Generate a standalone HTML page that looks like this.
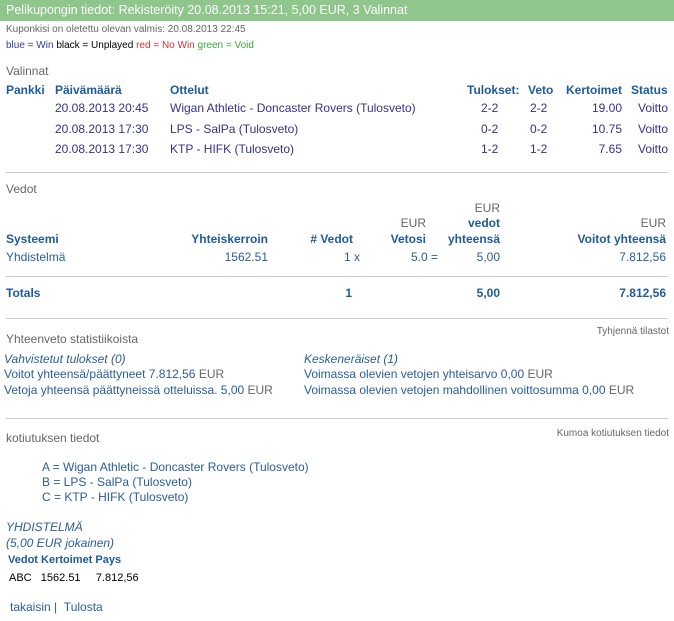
<!DOCTYPE html>
<html><head><meta charset="utf-8"><style>
body{margin:0;width:674px;height:621px;background:#fff;font-family:"Liberation Sans",Arial,sans-serif;font-size:12px;position:relative;overflow:hidden}
div.t{position:absolute;line-height:14px;white-space:nowrap}
.hd{position:absolute;left:0;top:0;width:674px;height:21px;background:#8fc68c;color:#fff;font-size:12.5px;line-height:21px;text-indent:6px}
.g{color:#666}.b{color:#1e5a9c;font-weight:bold}.d{color:#33338a}.lb{color:#2a5d9a}
.r{text-align:right}
.hr{position:absolute;left:6px;width:662px;height:1px;background:#ccc}
.s{font-size:10px}
.i{font-style:italic}
</style></head><body>
<div class="hd">Pelikupongin tiedot: Rekisteröity 20.08.2013 15:21, 5,00 EUR, 3 Valinnat</div>
<div class="t g s" style="left:6px;top:23px">Kuponkisi on oletettu olevan valmis: 20.08.2013 22:45</div>
<div class="t s" style="left:6px;top:39px"><span style="color:#3a3a9a">blue = Win</span> <span style="color:#000">black = Unplayed</span> <span style="color:#c33">red = No Win</span> <span style="color:#3a3">green = Void</span></div>
<div class="t g" style="left:6px;top:64px">Valinnat</div>
<div class="t b" style="left:6px;top:83px">Pankki</div>
<div class="t b" style="left:55px;top:83px">Päivämäärä</div>
<div class="t b" style="left:170px;top:83px">Ottelut</div>
<div class="t b" style="left:467px;top:83px">Tulokset:</div>
<div class="t b" style="left:528px;top:83px">Veto</div>
<div class="t b" style="left:566px;top:83px">Kertoimet</div>
<div class="t b" style="left:631px;top:83px">Status</div>

<div class="t d" style="left:55px;top:101px">20.08.2013 20:45</div>
<div class="t d" style="left:170px;top:101px">Wigan Athletic - Doncaster Rovers (Tulosveto)</div>
<div class="t d" style="left:481px;top:101px">2-2</div><div class="t d" style="left:530px;top:101px">2-2</div>
<div class="t d r" style="right:52px;top:101px">19.00</div><div class="t d" style="left:638px;top:101px">Voitto</div>

<div class="t d" style="left:55px;top:122px">20.08.2013 17:30</div>
<div class="t d" style="left:170px;top:122px">LPS - SalPa (Tulosveto)</div>
<div class="t d" style="left:481px;top:122px">0-2</div><div class="t d" style="left:530px;top:122px">0-2</div>
<div class="t d r" style="right:52px;top:122px">10.75</div><div class="t d" style="left:638px;top:122px">Voitto</div>

<div class="t d" style="left:55px;top:142px">20.08.2013 17:30</div>
<div class="t d" style="left:170px;top:142px">KTP - HIFK (Tulosveto)</div>
<div class="t d" style="left:481px;top:142px">1-2</div><div class="t d" style="left:530px;top:142px">1-2</div>
<div class="t d r" style="right:52px;top:142px">7.65</div><div class="t d" style="left:638px;top:142px">Voitto</div>

<div class="hr" style="top:172px"></div>
<div class="t g" style="left:6px;top:182px">Vedot</div>
<div class="t g r" style="right:174px;top:201px">EUR</div>
<div class="t g r" style="right:248px;top:216px">EUR</div>
<div class="t b r" style="right:174px;top:216px">vedot</div>
<div class="t g r" style="right:8px;top:216px">EUR</div>
<div class="t b" style="left:6px;top:232px">Systeemi</div>
<div class="t b r" style="right:406px;top:232px">Yhteiskerroin</div>
<div class="t b r" style="right:321px;top:232px"># Vedot</div>
<div class="t b r" style="right:248px;top:232px">Vetosi</div>
<div class="t b r" style="right:174px;top:232px">yhteensä</div>
<div class="t b r" style="right:8px;top:232px">Voitot yhteensä</div>

<div class="t lb" style="left:6px;top:250px">Yhdistelmä</div>
<div class="t lb r" style="right:406px;top:250px">1562.51</div>
<div class="t lb r" style="right:314px;top:250px">1 x</div>
<div class="t lb r" style="right:236px;top:250px">5.0 =</div>
<div class="t lb r" style="right:174px;top:250px">5,00</div>
<div class="t lb r" style="right:8px;top:250px">7.812,56</div>
<div class="hr" style="top:276px"></div>
<div class="t b" style="left:6px;top:286px">Totals</div>
<div class="t b r" style="right:322px;top:286px">1</div>
<div class="t b r" style="right:174px;top:286px">5,00</div>
<div class="t b r" style="right:8px;top:286px">7.812,56</div>
<div class="hr" style="top:318px"></div>

<div class="t g" style="left:6px;top:332px">Yhteenveto statistiikoista</div>
<div class="t g s" style="right:5px;top:325px">Tyhjennä tilastot</div>
<div class="t lb i" style="left:4px;top:352px">Vahvistetut tulokset (0)</div>
<div class="t" style="left:4px;top:367px"><span class="lb">Voitot yhteensä/päättyneet 7.812,56</span> <span class="g">EUR</span></div>
<div class="t" style="left:4px;top:383px"><span class="lb">Vetoja yhteensä päättyneissä otteluissa. 5,00</span> <span class="g">EUR</span></div>
<div class="t lb i" style="left:304px;top:352px">Keskeneräiset (1)</div>
<div class="t" style="left:304px;top:367px"><span class="lb">Voimassa olevien vetojen yhteisarvo 0,00</span> <span class="g">EUR</span></div>
<div class="t" style="left:304px;top:383px"><span class="lb">Voimassa olevien vetojen mahdollinen voittosumma 0,00</span> <span class="g">EUR</span></div>
<div class="hr" style="top:418px"></div>

<div class="t g" style="left:6px;top:431px">kotiutuksen tiedot</div>
<div class="t g s" style="right:5px;top:427px">Kumoa kotiutuksen tiedot</div>
<div class="t lb" style="left:42px;top:460px">A = Wigan Athletic - Doncaster Rovers (Tulosveto)</div>
<div class="t lb" style="left:42px;top:475px">B = LPS - SalPa (Tulosveto)</div>
<div class="t lb" style="left:42px;top:490px">C = KTP - HIFK (Tulosveto)</div>
<div class="t lb i" style="left:6px;top:520px">YHDISTELMÄ</div>
<div class="t lb i" style="left:6px;top:536px">(5,00 EUR jokainen)</div>
<div class="t b s" style="left:8px;top:553px;font-size:11px">Vedot Kertoimet Pays</div>
<div class="t s" style="left:9px;top:571px;color:#000;font-size:11px">ABC&nbsp;&nbsp;&nbsp;1562.51&nbsp;&nbsp;&nbsp;&nbsp;&nbsp;7.812,56</div>
<div class="t lb" style="left:10px;top:600px">takaisin | &nbsp;Tulosta</div>
</body></html>
